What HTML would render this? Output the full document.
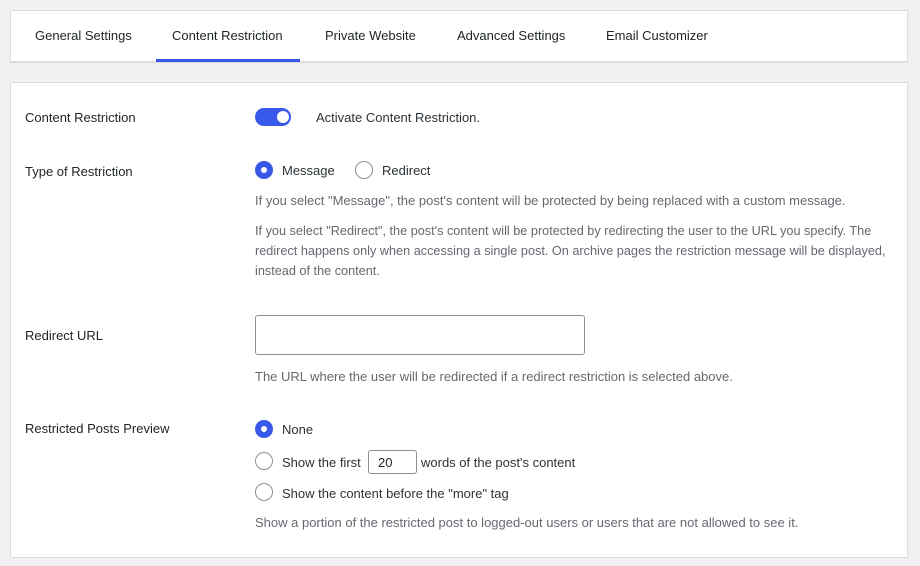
<!DOCTYPE html>
<html><head><style>
body{margin:0;background:#f0f0f1;width:920px;height:566px;position:relative;font-family:"Liberation Sans",sans-serif;color:#1d2327;overflow:hidden}
.a{position:absolute;white-space:nowrap}
.p{position:absolute;left:10px;width:896px;background:#fff;border:1px solid #dcdcde}
.tab{font-size:13px;top:28px;color:#1d2327}
.lbl{font-size:13px;left:25px}
.d{font-size:13px;color:#646970;left:255px}
.r{position:absolute;width:16px;height:16px;border:1px solid #8c8f94;border-radius:50%;background:#fff}
.r.on{border:none;width:18px;height:18px;background:#3858e9}
.r.on:after{content:"";position:absolute;left:6px;top:6px;width:6px;height:6px;border-radius:50%;background:#fff}
.t{font-size:13px;color:#2c3338}
</style></head><body>
<div class="p" style="top:10px;height:50px;border-bottom:2px solid #dcdcde"></div>
<div class="a" style="left:156px;top:59px;width:144px;height:3px;background:#3858e9"></div>
<div class="a tab" style="left:35px">General Settings</div>
<div class="a tab" style="left:172px">Content Restriction</div>
<div class="a tab" style="left:325px">Private Website</div>
<div class="a tab" style="left:457px">Advanced Settings</div>
<div class="a tab" style="left:606px">Email Customizer</div>

<div class="p" style="top:82px;height:474px"></div>
<div class="a lbl" style="top:110px">Content Restriction</div>
<div class="a" style="left:255px;top:108px;width:36px;height:18px;border-radius:9px;background:#3858e9"></div>
<div class="a" style="left:277px;top:111px;width:12px;height:12px;border-radius:50%;background:#fff"></div>
<div class="a t" style="left:316px;top:110px">Activate Content Restriction.</div>

<div class="a lbl" style="top:164px">Type of Restriction</div>
<div class="r on" style="left:255px;top:161px"></div>
<div class="a t" style="left:282px;top:163px">Message</div>
<div class="r" style="left:355px;top:161px"></div>
<div class="a t" style="left:382px;top:163px">Redirect</div>
<div class="a d" style="top:193px">If you select "Message", the post's content will be protected by being replaced with a custom message.</div>
<div class="a d" style="top:221px;line-height:20px;white-space:normal;width:645px;font-size:12.7px">If you select "Redirect", the post's content will be protected by redirecting the user to the URL you specify. The redirect happens only when accessing a single post. On archive pages the restriction message will be displayed, instead of the content.</div>

<div class="a lbl" style="top:328px">Redirect URL</div>
<div class="a" style="left:255px;top:315px;width:328px;height:38px;border:1px solid #8c8f94;border-radius:3px"></div>
<div class="a d" style="top:369px">The URL where the user will be redirected if a redirect restriction is selected above.</div>

<div class="a lbl" style="top:421px">Restricted Posts Preview</div>
<div class="r on" style="left:255px;top:420px"></div>
<div class="a t" style="left:282px;top:422px">None</div>
<div class="r" style="left:255px;top:452px"></div>
<div class="a t" style="left:282px;top:455px">Show the first</div>
<div class="a" style="left:368px;top:450px;width:47px;height:22px;border:1px solid #8c8f94;border-radius:3px"></div>
<div class="a t" style="left:378px;top:455px;color:#1d2327">20</div>
<div class="a t" style="left:421px;top:455px">words of the post's content</div>
<div class="r" style="left:255px;top:483px"></div>
<div class="a t" style="left:282px;top:486px">Show the content before the "more" tag</div>
<div class="a d" style="top:515px">Show a portion of the restricted post to logged-out users or users that are not allowed to see it.</div>
</body></html>
